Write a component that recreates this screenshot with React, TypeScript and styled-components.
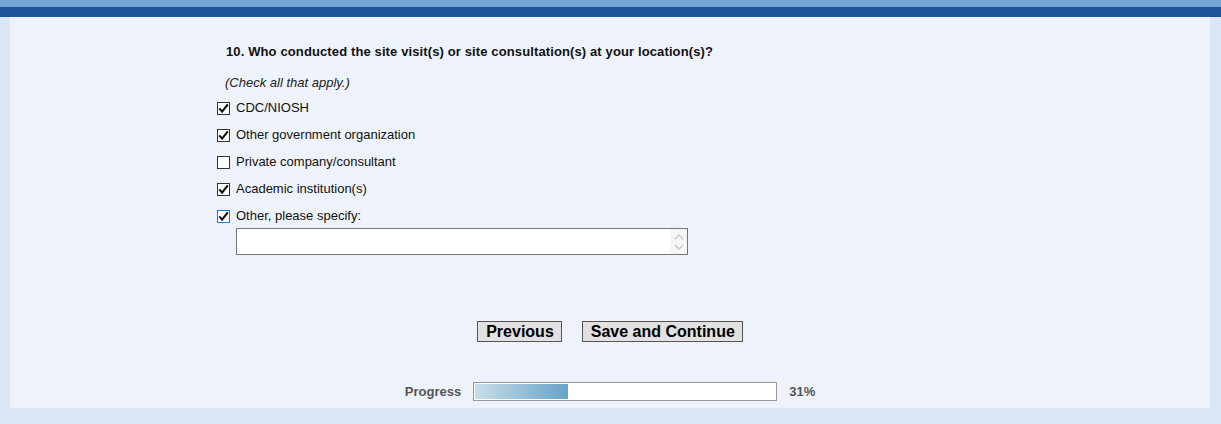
import React, { useState } from 'react';
import styled, { createGlobalStyle } from 'styled-components';

const GlobalStyle = createGlobalStyle`
  html, body {
    margin: 0;
    padding: 0;
    background: #dbe7f4;
    font-family: Arial, "Liberation Sans", sans-serif;
  }
`;

interface Option {
  id: string;
  label: string;
  checked: boolean;
}

const initialOptions: Option[] = [
  { id: 'cdc', label: 'CDC/NIOSH', checked: true },
  { id: 'gov', label: 'Other government organization', checked: true },
  { id: 'private', label: 'Private company/consultant', checked: false },
  { id: 'academic', label: 'Academic institution(s)', checked: true },
  { id: 'other', label: 'Other, please specify:', checked: true },
];

const PROGRESS = 31;

const App: React.FC = () => {
  const [options, setOptions] = useState<Option[]>(initialOptions);
  const [specify, setSpecify] = useState('');

  const toggle = (id: string) => {
    setOptions(opts => opts.map(o => (o.id === id ? { ...o, checked: !o.checked } : o)));
  };

  return (
    <Page>
      <GlobalStyle />
      <TopBar />
      <Panel>
        <Form>
          <Question>10. Who conducted the site visit(s) or site consultation(s) at your location(s)?</Question>
          <Hint>(Check all that apply.)</Hint>
          <OptionList>
            {options.map(o => (
              <OptionRow key={o.id} onClick={() => toggle(o.id)}>
                <Box focused={o.id === 'other'}>
                  {o.checked && (
                    <svg width="11" height="11" viewBox="0 0 11 11">
                      <path d="M1.3 5.4 L4.1 8.6 L9.8 1.4" fill="none" stroke="#111" strokeWidth="2.2" />
                    </svg>
                  )}
                </Box>
                <OptionLabel>{o.label}</OptionLabel>
              </OptionRow>
            ))}
          </OptionList>
          <SpecifyWrap>
            <SpecifyInput value={specify} onChange={e => setSpecify(e.target.value)} />
            <Spinner>
              <svg width="12" height="22" viewBox="0 0 12 22">
                <path d="M2 8 L6 4 L10 8" fill="none" stroke="#c6c6c6" strokeWidth="1.3" />
                <path d="M2 14 L6 18 L10 14" fill="none" stroke="#c6c6c6" strokeWidth="1.3" />
              </svg>
            </Spinner>
          </SpecifyWrap>
        </Form>
        <ButtonRow>
          <NavButton>Previous</NavButton>
          <NavButton>Save and Continue</NavButton>
        </ButtonRow>
        <ProgressRow>
          <ProgressLabel>Progress</ProgressLabel>
          <ProgressTrack>
            <ProgressFill style={{ width: `${PROGRESS}%` }} />
          </ProgressTrack>
          <ProgressLabel>{PROGRESS}%</ProgressLabel>
        </ProgressRow>
      </Panel>
    </Page>
  );
};

const Page = styled.div`
  width: 1221px;
  height: 424px;
  background: #dbe7f4;
  overflow: hidden;
`;

const TopBar = styled.div`
  height: 7px;
  background: #76a6d6;
  border-bottom: 10px solid #1e5598;
`;

const Panel = styled.div`
  margin: 0 11px 0 10px;
  background: #eef3fb;
  height: 391px;
  display: flex;
  flex-direction: column;
`;

const Form = styled.div`
  padding-left: 207px;
  padding-top: 27px;
`;

const Question = styled.div`
  margin-left: 9px;
  font-size: 13px;
  line-height: 16px;
  font-weight: bold;
  letter-spacing: 0.12px;
  color: #111;
`;

const Hint = styled.div`
  margin: 15px 0 0 8px;
  font-size: 13px;
  line-height: 16px;
  font-style: italic;
  color: #222;
`;

const OptionList = styled.div`
  margin-top: 3px;
  display: flex;
  flex-direction: column;
`;

const OptionRow = styled.div`
  height: 27px;
  display: flex;
  align-items: center;
  cursor: pointer;
`;

const Box = styled.span<{ focused?: boolean }>`
  box-sizing: border-box;
  width: 13px;
  height: 13px;
  margin-top: 1px;
  border: 1px solid ${p => (p.focused ? '#0a84e0' : '#333')};
  background: #fff;
  display: flex;
  align-items: center;
  justify-content: center;
  margin-right: 6px;
`;

const OptionLabel = styled.span`
  font-size: 13px;
  color: #111;
`;

const SpecifyWrap = styled.div`
  position: relative;
  margin: -1px 0 0 19px;
  width: 452px;
  height: 27px;
`;

const SpecifyInput = styled.textarea`
  box-sizing: border-box;
  width: 100%;
  height: 100%;
  border: 1px solid #767676;
  background: #fff;
  resize: none;
  padding: 2px 22px 2px 4px;
  font: 13px Arial, "Liberation Sans", sans-serif;
  outline: none;
`;

const Spinner = styled.div`
  position: absolute;
  top: 1px;
  right: 1px;
  width: 17px;
  height: 25px;
  background: #f6f6f6;
  display: flex;
  align-items: center;
  justify-content: center;
`;

const ButtonRow = styled.div`
  margin-top: 66px;
  display: flex;
  justify-content: center;
  gap: 20px;
`;

const NavButton = styled.button`
  height: 21px;
  padding: 0 7px 0 8px;
  background: #e1e1e1;
  border: 1px solid #555;
  border-radius: 0;
  font: bold 16px Arial, "Liberation Sans", sans-serif;
  color: #000;
  line-height: 18px;
  cursor: pointer;
`;

const ProgressRow = styled.div`
  margin-top: 40px;
  display: flex;
  justify-content: center;
  align-items: center;
  gap: 12px;
`;

const ProgressLabel = styled.span`
  font-size: 13px;
  font-weight: bold;
  color: #555;
`;

const ProgressTrack = styled.div`
  box-sizing: border-box;
  width: 304px;
  height: 19px;
  border: 1px solid #999;
  background: #fff;
  padding: 1px;
`;

const ProgressFill = styled.div`
  height: 100%;
  background: linear-gradient(to right, #cadde9, #66a3c8);
`;

export default App;
